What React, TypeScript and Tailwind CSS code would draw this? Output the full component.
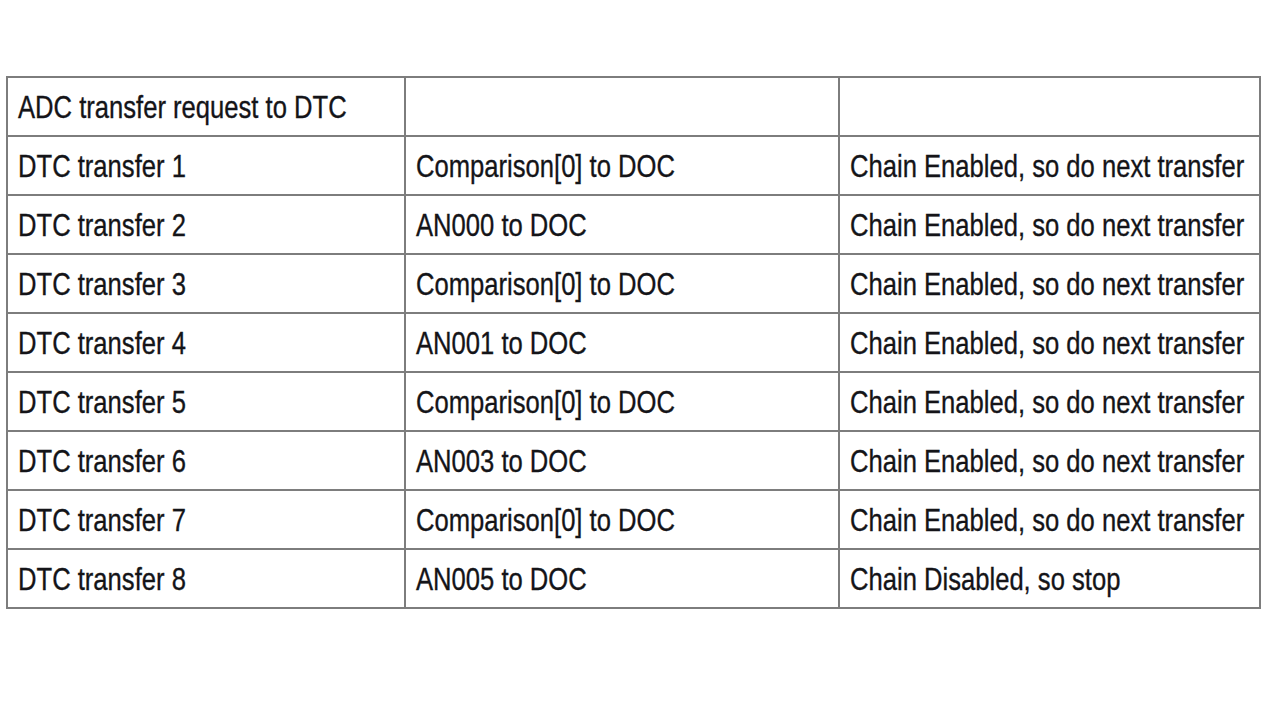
const rows: [string, string, string][] = [
  ["ADC transfer request to DTC", "", ""],
  ["DTC transfer 1", "Comparison[0] to DOC", "Chain Enabled, so do next transfer"],
  ["DTC transfer 2", "AN000 to DOC", "Chain Enabled, so do next transfer"],
  ["DTC transfer 3", "Comparison[0] to DOC", "Chain Enabled, so do next transfer"],
  ["DTC transfer 4", "AN001 to DOC", "Chain Enabled, so do next transfer"],
  ["DTC transfer 5", "Comparison[0] to DOC", "Chain Enabled, so do next transfer"],
  ["DTC transfer 6", "AN003 to DOC", "Chain Enabled, so do next transfer"],
  ["DTC transfer 7", "Comparison[0] to DOC", "Chain Enabled, so do next transfer"],
  ["DTC transfer 8", "AN005 to DOC", "Chain Disabled, so stop"],
];

export default function App() {
  return (
    <div className="w-[1280px] h-[721px] bg-white pt-[76px] pl-[6px] overflow-hidden">
      <table
        className="table-fixed w-[1253px] border-collapse text-[#141418] text-[32px] leading-none"
        style={{ fontFamily: '"Liberation Sans", Arial, sans-serif' }}
      >
        <colgroup>
          <col className="w-[398px]" />
          <col className="w-[434px]" />
          <col className="w-[421px]" />
        </colgroup>
        <tbody>
          {rows.map((r, i) => (
            <tr key={i} className="h-[59px]">
              {r.map((cell, j) => (
                <td key={j} className="border-2 border-[#7d7d7d] pl-[10px] pt-[1px] align-middle whitespace-nowrap overflow-visible">
                  <span className="inline-block origin-left scale-x-[0.8] [-webkit-text-stroke:0.35px_#141418]">{cell}</span>
                </td>
              ))}
            </tr>
          ))}
        </tbody>
      </table>
    </div>
  );
}
